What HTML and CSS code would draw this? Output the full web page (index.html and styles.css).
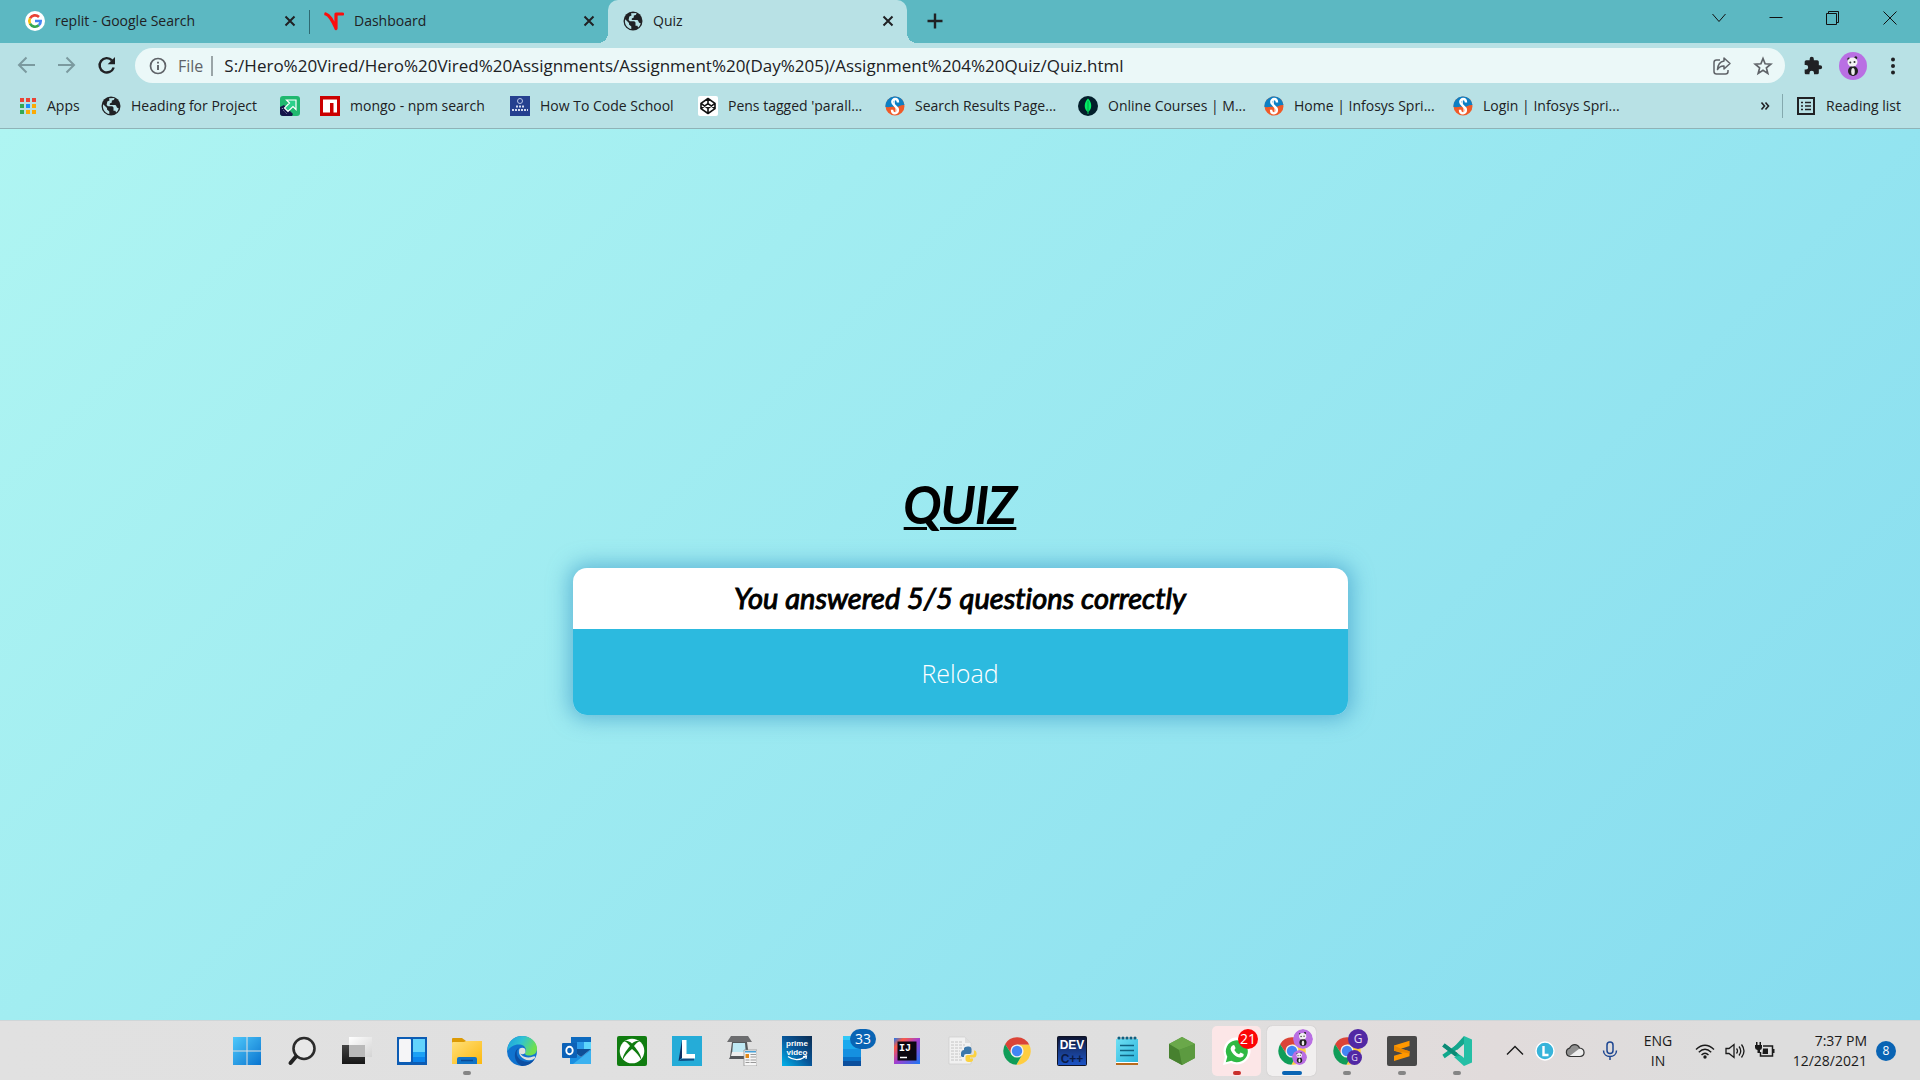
FILE: index.html
```html
<!DOCTYPE html>
<html lang="en">
<head>
<meta charset="utf-8">
<title>Quiz</title>
<link rel="stylesheet" href="styles.css">
</head>
<body>
<svg class="defs" aria-hidden="true">
  <defs>
    <symbol id="globe" viewBox="0 0 20 20"><circle cx="10" cy="10" r="9.5" fill="#202124"/><path d="M2.2 8.2L6 12v1.4l2.3 2v2.7C4.6 17.500 1.900 14 1.900 10.300zM8 2.300l5.500-.2c-.2 2-1.100 2.300-2.700 2.500v1.900l-2 .9v1.700h5.500c1.300 0 .9 2.600 2.300 2.900l1.100.3c-.4 1.800-1.300 3.200-2.600 4.200l-.7-1.800h-1.900v-3.200l-1.200-1.200H6.900L5.600 9l.7-3.600 2.200-.9z" fill="#b8e1e5"/></symbol>
    <symbol id="close" viewBox="0 0 20 20"><path d="M5.500 5.500l9 9M14.500 5.500l-9 9" stroke="#202124" stroke-width="2" fill="none"/></symbol>
    <symbol id="spring" viewBox="0 0 20 20"><circle cx="10" cy="10" r="9.500" fill="#f05a28"/><path d="M.5 11A9.500 9.500 0 0 1 19.500 9C15 8.500 14 11.500 10 11S5 11.500.5 11z" fill="#0d7fc4"/><path d="M13 6.500C13 2 7.300 2 7.300 6c0 3.500 5.600 4.500 5.600 8 0 4.500-5.900 4.500-5.900-.3" fill="none" stroke="#fff" stroke-width="2.400"/><path d="M9.300 4v4M11 11.500V16" stroke="#fff" stroke-width="1"/></symbol>
    <symbol id="panda" viewBox="0 0 28 28"><circle cx="14" cy="14" r="14" fill="#b96fe3"/><ellipse cx="14" cy="19" rx="5" ry="5" fill="#222"/><ellipse cx="14" cy="19.500" rx="1.800" ry="3.500" fill="#eee"/><circle cx="9.800" cy="7" r="1.500" fill="#222"/><circle cx="16.800" cy="5.800" r="1.500" fill="#222"/><ellipse cx="13.500" cy="10" rx="5" ry="4.500" fill="#f3f1f3"/><circle cx="11.300" cy="10.500" r="1" fill="#333"/><circle cx="15.500" cy="10" r="1" fill="#333"/></symbol>
    <symbol id="chrome" viewBox="0 0 48 48"><path d="M24 14h19.600A22 22 0 0 0 4.900 13l10.400 16z" fill="#db4437"/><path d="M32.700 29L23 46A22 22 0 0 0 43.600 14H24z" fill="#ffcd40"/><path d="M15.300 29L5 13a22 22 0 0 0 18 33l9.700-17z" fill="#0f9d58"/><circle cx="24" cy="24" r="10.500" fill="#f1f1f1"/><circle cx="24" cy="24" r="8.300" fill="#4285f4"/></symbol>
    <linearGradient id="sky" x1="0" y1="0" x2="1" y2="1"><stop offset="0" stop-color="#4fc9fb"/><stop offset="1" stop-color="#0a74cf"/></linearGradient>
    <linearGradient id="dark" x1="0" y1="0" x2="0" y2="1"><stop offset="0" stop-color="#444"/><stop offset="1" stop-color="#161616"/></linearGradient>
    <linearGradient id="glass" x1="0" y1="0" x2="1" y2="1"><stop offset="0" stop-color="#fff"/><stop offset="1" stop-color="#d4d4d4"/></linearGradient>
    <linearGradient id="folder" x1="0" y1="0" x2="1" y2="1"><stop offset="0" stop-color="#ffe07a"/><stop offset="1" stop-color="#fcb80e"/></linearGradient>
    <linearGradient id="edgetop" x1="0" y1="0" x2="1" y2=".4"><stop offset="0" stop-color="#1b9de0"/><stop offset=".5" stop-color="#30c3d2"/><stop offset="1" stop-color="#6fe04e"/></linearGradient>
    <linearGradient id="prime" x1="0" y1="1" x2="1" y2="0"><stop offset="0" stop-color="#02b4ec"/><stop offset=".5" stop-color="#07569a"/><stop offset="1" stop-color="#0b2c51"/></linearGradient>
    <linearGradient id="idea" x1="0" y1="0" x2="1" y2="1"><stop offset="0" stop-color="#1879f2"/><stop offset=".2" stop-color="#fc5a45"/><stop offset=".5" stop-color="#a23fd0"/><stop offset="1" stop-color="#1879f2"/></linearGradient>
    <linearGradient id="dev" x1="0" y1="0" x2="0" y2="1"><stop offset="0" stop-color="#0c1330"/><stop offset=".5" stop-color="#183a86"/><stop offset="1" stop-color="#1c55c8"/></linearGradient>
    <linearGradient id="pad" x1="0" y1="0" x2="1" y2="1"><stop offset="0" stop-color="#6fe0f4"/><stop offset="1" stop-color="#2ab4dc"/></linearGradient>
  </defs>
</svg>

<header class="browser">
  <div class="tabstrip">
    <nav class="tabs" aria-label="Open tabs">
      <div class="tab">
        <svg class="i20" viewBox="0 0 20 20"><circle cx="10" cy="10" r="10" fill="#fff"/><g fill="none" stroke-width="2.600"><path d="M5 7.300a5.700 5.700 0 0 1 9-1.300" stroke="#ea4335"/><path d="M5 12.700a5.700 5.700 0 0 1 0-5.400" stroke="#fbbc05"/><path d="M13.800 14.300A5.700 5.700 0 0 1 5 12.700" stroke="#34a853"/><path d="M10 10h5.700a5.700 5.700 0 0 1-1.900 4.300" stroke="#4285f4"/></g></svg>
        <span class="tab-title">replit - Google Search</span>
        <button class="tab-close" aria-label="Close tab"><svg class="i20"><use href="#close"/></svg></button>
      </div>
      <div class="tab divided">
        <svg class="i20" viewBox="0 0 20 20"><path d="M1.800 3C6 4 8.500 10 12 17.500V3h6.500" fill="none" stroke="#fb0d0d" stroke-width="3.200" stroke-linejoin="round" stroke-linecap="round"/></svg>
        <span class="tab-title">Dashboard</span>
        <button class="tab-close" aria-label="Close tab"><svg class="i20"><use href="#close"/></svg></button>
      </div>
      <div class="tab active">
        <svg class="i20"><use href="#globe"/></svg>
        <span class="tab-title">Quiz</span>
        <button class="tab-close" aria-label="Close tab"><svg class="i20"><use href="#close"/></svg></button>
      </div>
      <button class="new-tab" aria-label="New tab"><svg class="i20" viewBox="0 0 20 20"><path d="M10 2.500v15M2.500 10h15" stroke="#202124" stroke-width="2.400"/></svg></button>
    </nav>
    <div class="window-buttons">
      <button aria-label="Search tabs"><svg class="i20" viewBox="0 0 20 20"><path d="M3.500 6L10 13.500 16.500 6" fill="none" stroke="#111"/></svg></button>
      <button aria-label="Minimize"><svg class="i20" viewBox="0 0 20 20"><path d="M3.500 9.500h13" stroke="#111"/></svg></button>
      <button aria-label="Restore"><svg class="i20" viewBox="0 0 20 20"><path d="M3.500 5.500h10v11h-10zM5.500 5.500v-2h10v11h-2" fill="none" stroke="#111"/></svg></button>
      <button aria-label="Close"><svg class="i20" viewBox="0 0 20 20"><path d="M3.500 3.500l13 13M16.500 3.500l-13 13" stroke="#111"/></svg></button>
    </div>
  </div>

  <div class="toolbar">
    <div class="tools">
      <button aria-label="Back"><svg class="i20" viewBox="0 0 20 20"><path d="M18 9H3M9.500 1.500L2 9l7.500 7.500" fill="none" stroke="#7b9a9f" stroke-width="2"/></svg></button>
      <button aria-label="Forward"><svg class="i20" viewBox="0 0 20 20"><path d="M1 9h15.500M9.500 1.500L17 9l-7.500 7.500" fill="none" stroke="#7b9a9f" stroke-width="2"/></svg></button>
      <button aria-label="Reload page"><svg class="i20" viewBox="0 0 20 20"><path d="M15 4.300a7.200 7.200 0 1 0 1.700 7.200" fill="none" stroke="#202124" stroke-width="2.400"/><path d="M18 1v7.300h-7.300z" fill="#202124"/></svg></button>
    </div>
    <div class="omnibox">
      <svg class="i18" viewBox="0 0 18 18"><circle cx="9" cy="9" r="7.500" fill="none" stroke="#5f6368" stroke-width="1.700"/><path d="M9 8v5M9 4.800v1.800" stroke="#5f6368" stroke-width="1.900"/></svg>
      <label class="scheme" for="url">File</label>
      <input id="url" class="url" type="text" value="S:/Hero%20Vired/Hero%20Vired%20Assignments/Assignment%20(Day%205)/Assignment%204%20Quiz/Quiz.html">
      <button aria-label="Share"><svg class="i20" viewBox="0 0 20 20"><path d="M8 4H4.500Q2 4 2 6.500v9Q2 18 4.500 18h9q2.500 0 2.500-2.500V14" fill="none" stroke="#5f6368" stroke-width="1.500"/><path d="M12 2l6 5.500-6 5.500v-3q-4-.3-6.500 3.500Q6 6 12 5z" fill="none" stroke="#5f6368" stroke-width="1.500" stroke-linejoin="round"/></svg></button>
      <button aria-label="Bookmark this page"><svg class="i20" viewBox="0 0 20 20"><path d="M10 2.500l2.100 5.300 5.700.4-4.400 3.700 1.400 5.500L10 14.300l-4.800 3.100 1.400-5.500L2.200 8.200l5.700-.4z" fill="none" stroke="#5f6368" stroke-width="1.700"/></svg></button>
    </div>
    <div class="tools">
      <button aria-label="Extensions"><svg class="i20" viewBox="0 0 24 24"><path d="M20.500 11H19V7a2 2 0 0 0-2-2h-4V3.500a2.500 2.500 0 0 0-5 0V5H4a2 2 0 0 0-2 2v3.800h1.500a2.700 2.700 0 0 1 0 5.400H2V20c0 1.100.9 2 2 2h3.800v-1.500a2.700 2.700 0 0 1 5.400 0V22H17a2 2 0 0 0 2-2v-4h1.500a2.500 2.500 0 0 0 0-5z" fill="#202124"/></svg></button>
      <button aria-label="Profile"><svg class="i28"><use href="#panda"/></svg></button>
      <button aria-label="Menu"><svg class="i20" viewBox="0 0 20 20"><g fill="#202124"><circle cx="10" cy="3.500" r="2"/><circle cx="10" cy="10" r="2"/><circle cx="10" cy="16.500" r="2"/></g></svg></button>
    </div>
  </div>

  <nav class="bookmarks" aria-label="Bookmarks">
    <div class="bookmark-list">
      <a href="#"><svg class="i18" viewBox="0 0 18 18"><path d="M1 1h4v4H1zM7 1h4v4H7zM13 1h4v4h-4z" fill="#ea4335"/><path d="M1 7h4v4H1z" fill="#34a853"/><path d="M7 7h4v4H7z" fill="#1a8cff"/><path d="M13 7h4v4h-4zM7 13h4v4H7zM13 13h4v4h-4z" fill="#fbaa05"/><path d="M1 13h4v4H1z" fill="#34a853"/></svg>Apps</a>
      <a href="#"><svg class="i20"><use href="#globe"/></svg>Heading for Project</a>
      <a href="#" aria-label="Shortcut"><svg class="i20" viewBox="0 0 20 20"><rect width="20" height="20" rx="3" fill="#1fb86f"/><path d="M0 11l4-2 9 9-1 2H3q-3 0-3-3z" fill="#141449"/><path d="M6.500 4H16v9.500l-3-3-5 5L4.500 12l5-5z" fill="#2bd08a" stroke="#fff" stroke-width="1.200"/><path d="M2 12l2 3 3 3" stroke="#c9c9e8" stroke-width="1" stroke-dasharray="1 2" fill="none"/></svg></a>
      <a href="#"><svg class="i20" viewBox="0 0 20 20"><path d="M0 0h20v20H0z" fill="#cb0000"/><path d="M3 3.500h14v13h-3.500V7H10v9.500H3z" fill="#fff"/></svg>mongo - npm search</a>
      <a href="#"><svg class="i20" viewBox="0 0 20 20"><path d="M0 0h20v20H0z" fill="#25408f"/><circle cx="10" cy="5" r="2.500" fill="none" stroke="#b9c4e6"/><path d="M6 10.500h8M2 14h16" stroke="#d4dbef" stroke-width="2" stroke-dasharray="2 1"/></svg>How To Code School</a>
      <a href="#"><svg class="i20" viewBox="0 0 20 20"><rect width="20" height="20" rx="2" fill="#fff"/><path d="M10 2.500l7 4.800v5.400l-7 4.800-7-4.800V7.300zM3 7.300l7 5 7-5M3 12.700l7-5 7 5M10 2.500v5.200M10 12.300v5.200" fill="none" stroke="#111" stroke-width="1.600" stroke-linejoin="round"/></svg>Pens tagged 'parall...</a>
      <a href="#"><svg class="i20"><use href="#spring"/></svg>Search Results Page...</a>
      <a href="#"><svg class="i20" viewBox="0 0 20 20"><circle cx="10" cy="10" r="10" fill="#021e2b"/><path d="M10 2.500c4 4 4.500 10 .4 13.500V18h-.8v-2C5.500 12.500 6 6.500 10 2.500z" fill="#00ed64"/><path d="M10 5v11" stroke="#0a8a43" stroke-width=".8"/></svg>Online Courses | M...</a>
      <a href="#"><svg class="i20"><use href="#spring"/></svg>Home | Infosys Spri...</a>
      <a href="#"><svg class="i20"><use href="#spring"/></svg>Login | Infosys Spri...</a>
    </div>
    <button class="more" aria-label="More bookmarks"><svg class="i10" viewBox="0 0 10 10"><path d="M1.500 1.500L4.500 5l-3 3.500M5.500 1.500l3 3.500-3 3.500" fill="none" stroke="#202124" stroke-width="1.600"/></svg></button>
    <button class="reading"><svg class="i20" viewBox="0 0 20 20"><path d="M2 2h16v16H2z" fill="none" stroke="#202124" stroke-width="2"/><path d="M5 6.500h2M9 6.500h6M5 10h2M9 10h6M5 13.500h2M9 13.500h6" stroke="#202124" stroke-width="1.600"/></svg>Reading list</button>
  </nav>
</header>

<main class="page">
  <h1 class="title">QUIZ</h1>
  <section class="card">
    <h2 class="result">You answered 5/5 questions correctly</h2>
    <button class="reload">Reload</button>
  </section>
</main>

<footer class="taskbar">
  <div class="apps">
    <button class="app" aria-label="Start"><svg class="i30" viewBox="0 0 30 30"><path d="M1 1h13.500v13.500H1zM15.500 1H29v13.500H15.500zM1 15.500h13.500V29H1zM15.500 15.500H29V29H15.500z" fill="url(#sky)"/></svg></button>
    <button class="app" aria-label="Search"><svg class="i30" viewBox="0 0 30 30"><circle cx="17" cy="12.500" r="10.500" fill="#e8e8e8" stroke="#2b2b2b" stroke-width="2.600"/><path d="M9 20.500L3.500 27" stroke="#222" stroke-width="4" stroke-linecap="round"/></svg></button>
    <button class="app" aria-label="Task view"><svg class="i30" viewBox="0 0 30 30"><path d="M0 9h23v19H0z" fill="url(#dark)"/><path d="M7 1h23v20H7z" fill="url(#glass)"/><path d="M7 9h16v12H7z" fill="#b9b9b9"/></svg></button>
    <button class="app" aria-label="Widgets"><svg class="i30" viewBox="0 0 30 30"><path d="M0 1h30v28H0z" fill="#0c5cb4"/><rect x="2" y="3" width="12" height="23" rx="1" fill="#f5f5f7"/><path d="M16 3h12v13H16z" fill="#62d3fc"/><path d="M16 16h12v5H16z" fill="#1ba1f5"/><path d="M16 21h12v5H16z" fill="#0a84ec"/></svg></button>
    <button class="app running" aria-label="File Explorer"><svg class="i30" viewBox="0 0 30 30"><path d="M0 3q0-1 1-1h9l4 3v5H0z" fill="#dc9a05"/><path d="M0 7q0-1 1-1h11l2-1h16v23H0z" fill="url(#folder)"/><path d="M5 28v-5q0-2 2-2h16q2 0 2 2v5z" fill="#1173c6"/><path d="M9 24.500h12" stroke="#0a4a94" stroke-width="1.500"/></svg></button>
    <button class="app" aria-label="Edge"><svg class="i30" viewBox="0 0 30 30"><circle cx="15" cy="15" r="15" fill="#1073cf"/><path d="M.5 12C2 4.500 8 0 15 0c8.500 0 15 6 15 12.500 0 5-3.500 7-7.500 7-4 0-5.500-1.500-4-3.500C20 13.500 18 9 13 8.500 7 8 3 11 .5 15z" fill="url(#edgetop)"/><path d="M13 11c-6 4-3.500 13 5 14.500 4 .6 7.500-.5 9.800-2.500A15 15 0 0 1 15 30C9 28 6 20 9 14.500q1.500-2.500 4-3.500z" fill="#0d4fa3"/><path d="M12.500 12c-1.500 7 6 11.500 13.500 8.500q3-1.200 2 1.500-2.500 2.500-6 2.300C15 24 10 18 12.500 12z" fill="#e0e0e0"/><circle cx="15.300" cy="15" r="3.200" fill="#e0e0e0"/></svg></button>
    <button class="app" aria-label="Outlook"><svg class="i30" viewBox="0 0 30 30"><path d="M9 1h20v12H9z" fill="#0d6abf"/><path d="M15 6h7v7h-7z" fill="#2a9ae8"/><path d="M22 6h7v7h-7z" fill="#5cd5fc"/><path d="M8 13l11 8 10-8v15H8z" fill="#1a8ee0"/><path d="M29 14L11 28h18z" fill="#3cb2f0"/><path d="M8 13h21l-10 8z" fill="#0e4f97"/><rect y="7" width="15" height="15" rx="1" fill="#0c62b8"/><ellipse cx="7.500" cy="14.500" rx="3.200" ry="3.700" fill="none" stroke="#fff" stroke-width="1.900"/></svg></button>
    <button class="app" aria-label="Xbox"><svg class="i30" viewBox="0 0 30 30"><rect width="30" height="30" rx="2" fill="#107c10"/><circle cx="15" cy="15" r="12.300" fill="#fff"/><path d="M7 5.500c2-1.500 5-.5 8 2 3-2.500 6-3.500 8-2-2 0-4 2-6 4.500 4 4.500 8 11 7 13.500-1.500-3-5-7.500-9-10.500-4 3-7.500 7.500-9 10.500-1-2.500 3-9 7-13.500C11 7.500 9 5.500 7 5.500z" fill="#107c10"/></svg></button>
    <button class="app" aria-label="Lens"><svg class="i30" viewBox="0 0 30 30"><path d="M0 0h30v30H0z" fill="#25acd8"/><path d="M10 4L6.500 25 12 20z" fill="#0c2e63"/><path d="M6.500 25L22 24.500V22H11z" fill="#0d4d83"/><path d="M10 4h4.500v14H23v4.500H10z" fill="#fff"/></svg></button>
    <button class="app" aria-label="Scanner"><svg class="i30" viewBox="0 0 30 30"><path d="M4 0h17l4 6H0z" fill="#6c6d6f"/><path d="M5 6h15l2 15 1 2H2l1-2z" fill="#55585b"/><path d="M6 7h12l1 12H5z" fill="#bfe9f4"/><path d="M5 16h14v4H4z" fill="#eee"/><path d="M17 14h13v16H17z" fill="#f6f6f6" stroke="#888" stroke-width=".7"/><path d="M18 15h11v1.500H18z" fill="#49a2d8"/><path d="M18.500 18H22v4h-3.500z" fill="#e18918"/><path d="M23.500 18.500H29M23.500 21H29M18.500 24h4M18.500 26.500h4M23.500 24H29M23.500 26.500H29" stroke="#999"/></svg></button>
    <button class="app" aria-label="Prime Video"><svg class="i30" viewBox="0 0 30 30"><path d="M0 0h30v30H0z" fill="url(#prime)"/><text x="15" y="10" class="prime-word">prime</text><text x="15" y="19" class="prime-word">video</text><path d="M6 20.500c5 4 12 4 17 .5l1-1.500M21 20.500l3.500-.5-.5 3" fill="none" stroke="#fff" stroke-width="1.200"/></svg></button>
    <button class="app" aria-label="Your Phone, 33 notifications"><svg class="i30" viewBox="0 0 30 30"><path d="M6 0h18v8H6z" fill="#31c8f7"/><path d="M6 4h18v10H6z" fill="#1aa9ee"/><path d="M6 13h18v9H6z" fill="#1590e0"/><path d="M6 21h18v5H6z" fill="#0a70c6"/><path d="M6 25h18v5H6z" fill="#0b4f9d"/></svg><span class="count blue">33</span></button>
    <button class="app" aria-label="IntelliJ IDEA"><svg class="i30" viewBox="0 0 30 30"><path d="M2 2h26v26H2z" fill="url(#idea)"/><path d="M5.500 5.500h19v19h-19z" fill="#0b0710"/><text x="7" y="15" class="idea-word">IJ</text><path d="M8 21.500h7" stroke="#fff" stroke-width="1.500"/></svg></button>
    <button class="app" aria-label="Python"><svg class="i30" viewBox="0 0 30 30"><path d="M2 1h16l6 6v21H2z" fill="#f1f1f1" stroke="#ccc" stroke-width=".7"/><path d="M18 1v6h6z" fill="#ddd"/><path d="M4 6h11M4 9h14M4 12h12M4 15h9M4 18h9M4 21h10M4 24h12" stroke="#c4c4c4" stroke-dasharray="3 1"/><path d="M17 14v-2q1-2 5-1.500 2.500.3 2.500 2.500v3q0 2-2 2H19q-2 0-2 2v1h-2q-1.500-1-1-4t3-3h4" fill="#3c78ab"/><path d="M27 14.500h1q2 1 1.500 4.500-.5 2.500-2.500 2.500h-4v1h3v2q-1 2-4.500 1.500-3-.3-3-2.500v-3q0-1.500 2-1.500H25q2 0 2-2z" fill="#fbd240"/></svg></button>
    <button class="app" aria-label="Chrome"><svg class="i30"><use href="#chrome"/></svg></button>
    <button class="app" aria-label="Dev-C++"><svg class="i30" viewBox="0 0 30 30"><rect x=".5" y=".5" width="29" height="29" rx="1" fill="url(#dev)" stroke="#101426"/><text x="15" y="13" class="dev-word">DEV</text><text x="15" y="27" class="dev-word plus">C++</text></svg></button>
    <button class="app" aria-label="Notepad"><svg class="i30" viewBox="0 0 30 30"><path d="M4 3h22v24H4z" fill="url(#pad)"/><path d="M4 27h22v2H4z" fill="#b86a1c"/><path d="M4 26h22v1H4z" fill="#fff"/><path d="M8 9.500h14M8 14.500h14M8 19.500h14" stroke="#106282" stroke-width="1.600"/><g fill="#12607f"><circle cx="7" cy="2" r="1.600"/><circle cx="11" cy="2" r="1.600"/><circle cx="15" cy="2" r="1.600"/><circle cx="19" cy="2" r="1.600"/><circle cx="23" cy="2" r="1.600"/></g></svg></button>
    <button class="app" aria-label="Node.js"><svg class="i30" viewBox="0 0 30 30"><path d="M15 1l13 7v14l-13 7-13-7V8z" fill="#54973a"/><path d="M15 1l13 7-16 6-10-6z" fill="#6aa84a"/><path d="M28 8v14l-13 7-3-15z" fill="#5c9a40"/><path d="M2 8l10 6 3 15-13-7z" fill="#47812f"/></svg></button>
    <button class="app alert" aria-label="WhatsApp, 21 messages"><svg class="i30" viewBox="0 0 30 30"><path d="M1 29l2-8A13.500 13.500 0 1 1 9 27z" fill="#fff"/><path d="M3.800 26.300l1.500-5.500a11 11 0 1 1 4 4z" fill="#2fb944"/><path d="M10.500 9.500q1-1 2 0l1 2.500q0 1-1.200 2 1.500 3 4.700 4.200l1.600-1.700 3 1.500q.5 3-3 3.500c-4 .5-10-5-10-9q.2-2 1.900-3z" fill="#fff"/></svg><span class="count red">21</span></button>
    <button class="app current" aria-label="Chrome profile 1"><svg class="i30"><use href="#chrome"/></svg><svg class="face big" viewBox="0 0 28 28"><use href="#panda" width="28" height="28"/></svg><svg class="face small" viewBox="0 0 28 28"><use href="#panda" width="28" height="28"/></svg></button>
    <button class="app running" aria-label="Chrome profile 2"><svg class="i30"><use href="#chrome"/></svg><span class="face letter big">G</span><span class="face letter small">G</span></button>
    <button class="app running" aria-label="Sublime Text"><svg class="i30" viewBox="0 0 30 30"><rect width="30" height="30" rx="2" fill="#484848"/><path d="M7 9.500l15.500-4.700V10L14 12.700l8.500 2.500v5L7 25v-5.200l8.500-2.600L7 14.700z" fill="#ff9800"/><path d="M7 9.500l7 3.200 8.500 2.500v2.300L7 14.700z" fill="#e88600"/></svg></button>
    <button class="app running" aria-label="VS Code"><svg class="i30" viewBox="0 0 30 30"><path d="M1.500 9L22 24.500M1.500 20.500L22 6" stroke="#10a88c" stroke-width="4" fill="none"/><path d="M1.500 9l13 9.800" stroke="#0c8a75" stroke-width="4"/><path d="M22 0l8 3.500v23L22 30 12 21l10-2z" fill="#25bfa5"/><path d="M22 0v10l-6 5-4-4z" fill="#14a68d"/><path d="M22 8v14l-8-7z" fill="#dedddd"/></svg></button>
  </div>
  <div class="tray">
    <button aria-label="Hidden icons"><svg class="i20" viewBox="0 0 20 20"><path d="M2 13.500L10 5.500l8 8" fill="none" stroke="#1a1a1a" stroke-width="1.400"/></svg></button>
    <button aria-label="Lens status"><svg class="i20" viewBox="0 0 20 20"><circle cx="10" cy="10" r="9" fill="#37b4da" stroke="#fff" stroke-width="1.400"/><path d="M8.500 5v9h5" fill="none" stroke="#fff" stroke-width="2.400"/></svg></button>
    <button aria-label="OneDrive"><svg class="i20" viewBox="0 0 20 20"><path d="M5 15.500a4.300 4.300 0 0 1-.4-8.400C7 2.500 12.500 2.500 14.500 7c6 .5 6 8.500.5 8.500z" fill="#909090"/><path d="M4 15.500L14.500 7.500c6 .5 5.500 8 .5 8z" fill="#eee"/><path d="M5 15.500a4.300 4.300 0 0 1-.4-8.400C7 2.500 12.500 2.500 14.500 7c6 .5 6 8.500.5 8.500z" fill="none" stroke="#333" stroke-width="1.200"/></svg></button>
    <button class="mic" aria-label="Microphone"><svg class="i20" viewBox="0 0 20 20"><rect x="7" y="1" width="6" height="11.500" rx="3" fill="none" stroke="#1d4691" stroke-width="1.500"/><path d="M3.500 9.500c0 8 13 8 13 0M10 15.500V19" fill="none" stroke="#1d4691" stroke-width="1.500"/></svg></button>
    <button class="lang">ENG<br>IN</button>
    <button aria-label="Wi-Fi"><svg class="i20" viewBox="0 0 20 20"><path d="M1 8.500q9-8.500 18 0M3.800 11.300q6.200-6 12.400 0M6.500 14q3.500-3.500 7 0" fill="none" stroke="#1a1a1a" stroke-width="1.400"/><circle cx="10" cy="16" r="1.700" fill="#1a1a1a"/></svg></button>
    <button aria-label="Volume"><svg class="i20" viewBox="0 0 20 20"><path d="M1 7.500h3L9 3.500v13L4 12.500H1zM11.500 7.500q2 2.500 0 5M14 5.500q3.500 4.500 0 9M16.500 3.500q5 6.500 0 13" fill="none" stroke="#1a1a1a" stroke-width="1.300"/></svg></button>
    <button aria-label="Battery"><svg class="i20" viewBox="0 0 20 20"><path d="M8 5h9.500v10h-12v-4" fill="none" stroke="#1a1a1a" stroke-width="1.500"/><path d="M8 7.500h5v5.500H7.500z" fill="#1a1a1a"/><path d="M18.500 8v4" stroke="#1a1a1a" stroke-width="2"/><path d="M0 4h7v2.500q0 2-2 2.500v3H2.500V9Q0 8.500 0 6.500zM1 1h1.500v3H1zM4.500 1H6v3H4.500z" fill="#1a1a1a"/></svg></button>
    <button class="clock"><time datetime="2021-12-28T19:37">7:37 PM<br>12/28/2021</time></button>
    <button class="notices" aria-label="8 notifications">8</button>
  </div>
</footer>
</body>
</html>
```
FILE: styles.css
```css
* { box-sizing: border-box; }

body {
  margin: 0;
  min-height: 100vh;
  display: flex;
  flex-direction: column;
  font: 14px/20px "Open Sans", "Noto Sans", sans-serif;
  color: #202124;
}

button {
  display: flex;
  align-items: center;
  justify-content: center;
  margin: 0;
  padding: 0;
  border: 0;
  background: none;
  font: inherit;
  color: inherit;
}

a { color: inherit; text-decoration: none; }
svg { display: block; flex: none; }
.defs { position: absolute; width: 0; height: 0; }
.i10 { width: 10px; height: 10px; }
.i18 { width: 18px; height: 18px; }
.i20 { width: 20px; height: 20px; }
.i28 { width: 28px; height: 28px; }
.i30 { width: 30px; height: 30px; }

/* Browser frame */
.browser { background: #b8e1e5; border-bottom: 1px solid #8fb3b7; }

.tabstrip {
  display: flex;
  justify-content: space-between;
  background: #5cb8c2;
  height: 43px;
}
.tabs { display: flex; flex: 1; padding-left: 10px; }
.tab {
  position: relative;
  display: flex;
  align-items: center;
  gap: 10px;
  flex: 0 1 299px;
  padding: 0 9px 2px 15px;
}
.tab-title { flex: 1; white-space: nowrap; overflow: hidden; }
.divided::before {
  content: "";
  position: absolute;
  left: 0;
  top: 10px;
  width: 1px;
  height: 24px;
  background: #2f6a72;
}
.active { background: #b8e1e5; border-radius: 10px 10px 0 0; }
.active::before, .active::after {
  content: "";
  position: absolute;
  bottom: 0;
  width: 10px;
  height: 10px;
}
.active::before { right: 100%; background: radial-gradient(circle at 0 0, #5cb8c2 10px, #b8e1e5 10px); }
.active::after { left: 100%; background: radial-gradient(circle at 100% 0, #5cb8c2 10px, #b8e1e5 10px); }
.new-tab { width: 56px; padding-bottom: 2px; }

.window-buttons { display: flex; height: 38px; padding: 0 2px 2px 0; }
.window-buttons button { width: 57px; }

.toolbar { display: flex; gap: 8px; padding: 5px 7px; }
.tools { display: flex; }
.tools button { width: 40px; height: 35px; }
.omnibox {
  flex: 1;
  display: flex;
  align-items: center;
  height: 35px;
  padding: 0 2px 0 14px;
  border-radius: 18px;
  background: #ebf8f8;
  font-size: 17px;
}
.omnibox button { width: 41px; height: 35px; }
.scheme {
  margin-left: 11px;
  padding-right: 8px;
  border-right: 2px solid #9aa5a7;
  font-size: 16px;
  color: #5f6368;
}
.url {
  flex: 1;
  min-width: 0;
  padding: 0 0 0 11px;
  border: 0;
  outline: 0;
  background: none;
  font: inherit;
  color: inherit;
}

.bookmarks { display: flex; align-items: center; height: 40px; padding: 0 19px 4px 19px; }
.bookmark-list {
  flex: 1;
  display: grid;
  grid-template-columns: 82px 179px 40px 190px 188px 187px 193px 186px 189px auto;
}
.bookmark-list a { display: flex; align-items: center; gap: 10px; white-space: nowrap; }
.more { width: 36px; height: 24px; border-right: 1px solid #84a9ae; }
.reading { gap: 10px; padding-left: 13px; }

/* Quiz page */
.page {
  flex: 1;
  display: flex;
  flex-direction: column;
  align-items: center;
  justify-content: center;
  padding-top: 40px;
  background: linear-gradient(135deg, #aff5f2, #86dcef);
  font-family: Lato, sans-serif;
  color: #000;
}
.title {
  margin: 0 0 34px;
  font: italic 50px/60px Lato, sans-serif;
  -webkit-text-stroke: 2px #000;
  text-decoration: underline;
  text-decoration-thickness: 3px;
  text-underline-offset: 4px;
}
.card {
  width: 775px;
  max-width: 100%;
  overflow: hidden;
  border-radius: 14px;
  background: #fff;
  box-shadow: 0 0 20px 5px rgba(60, 155, 200, .6);
}
.result {
  margin: 0;
  padding: 12px 20px 13px;
  font: italic 29px/36px Lato, sans-serif;
  font-variant-ligatures: none;
  -webkit-text-stroke: 1px #000;
  text-align: center;
}
.reload {
  width: 100%;
  padding: 27px 26px 25px;
  background: #2cbadf;
  font: 300 25px/34px "Open Sans", sans-serif;
  color: #fff;
}

/* Taskbar */
.taskbar {
  display: flex;
  justify-content: space-between;
  align-items: center;
  height: 60px;
  padding: 0 24px 0 219px;
  border-top: 1px solid #cfd6d8;
  background: linear-gradient(to right, #e1e1e1, #dfdfdf 60%, #e1dbdb 78%, #dddddd 90%);
  color: #1a1a1a;
}
.apps, .tray { display: flex; align-items: center; }
.app {
  position: relative;
  width: 49px;
  height: 50px;
  margin: 0 3px;
  border-radius: 5px;
}
.running::after, .alert::after, .current::after {
  content: "";
  position: absolute;
  left: 50%;
  bottom: 1px;
  width: 8px;
  height: 4px;
  margin-left: -4px;
  border-radius: 2px;
  background: #858585;
}
.alert { background: #fce6e7; }
.alert::after { background: #c9302c; }
.current { background: #f1efef; box-shadow: 0 0 1px #aaa; }
.current::after { width: 20px; margin-left: -10px; background: #0964b4; }

.count {
  position: absolute;
  top: 3px;
  right: 3px;
  height: 20px;
  border-radius: 10px;
  line-height: 20px;
  color: #fff;
}
.blue { width: 26px; right: 0; background: #0964b4; }
.red { width: 20px; background: #fb0505; }
.face { position: absolute; border-radius: 50%; }
.big { width: 20px; height: 20px; top: 3px; right: 3px; }
.small { width: 15px; height: 15px; top: 24px; right: 9px; }
.letter { background: #5128a4; color: #e4dcf5; text-align: center; }
.letter.big { font-size: 12px; line-height: 20px; }
.letter.small { font-size: 9px; line-height: 15px; }

.prime-word { font: bold 8px "Liberation Sans", sans-serif; fill: #fff; text-anchor: middle; }
.idea-word { font: bold 10px "Liberation Mono", monospace; fill: #fff; }
.dev-word { font: bold 12px "Liberation Sans", sans-serif; fill: #fff; text-anchor: middle; }
.plus { fill: #0b1a44; }

.tray button { width: 30px; height: 50px; }
.tray .mic { width: 40px; }
.tray .lang { width: 60px; padding-right: 4px; }
.tray .clock { width: 87px; justify-content: flex-end; text-align: right; }
.tray .notices {
  width: 20px;
  height: 20px;
  margin-left: 9px;
  border-radius: 50%;
  background: #0964b4;
  font-size: 12px;
  color: #fff;
}
```
